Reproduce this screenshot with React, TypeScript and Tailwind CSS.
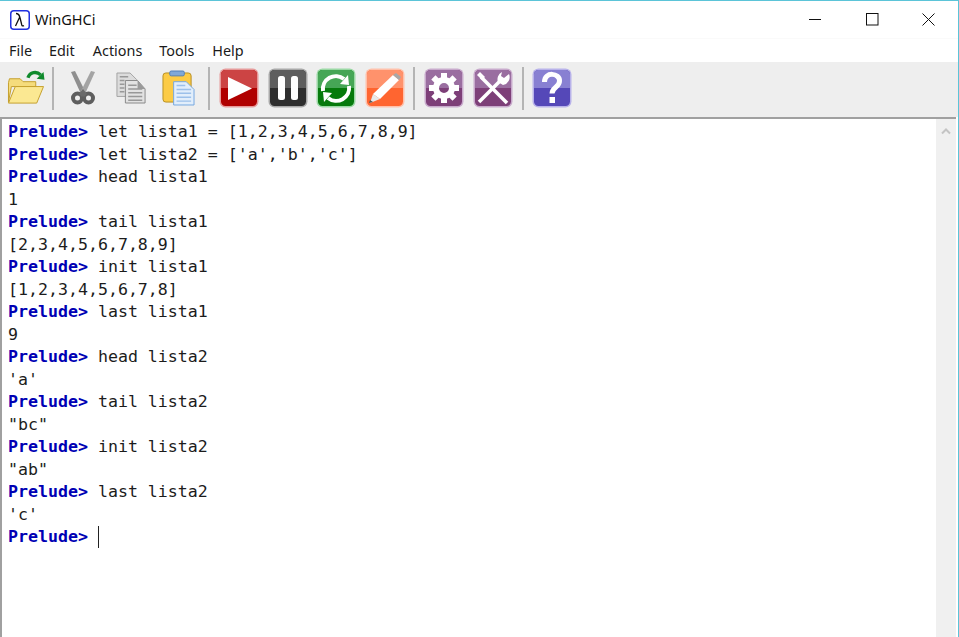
import type { ReactNode } from 'react';

// session transcript, true = prompt line
const lines: [boolean, string][] = [
  [true, 'let lista1 = [1,2,3,4,5,6,7,8,9]'],
  [true, "let lista2 = ['a','b','c']"],
  [true, 'head lista1'],
  [false, '1'],
  [true, 'tail lista1'],
  [false, '[2,3,4,5,6,7,8,9]'],
  [true, 'init lista1'],
  [false, '[1,2,3,4,5,6,7,8]'],
  [true, 'last lista1'],
  [false, '9'],
  [true, 'head lista2'],
  [false, "'a'"],
  [true, 'tail lista2'],
  [false, '"bc"'],
  [true, 'init lista2'],
  [false, '"ab"'],
  [true, 'last lista2'],
  [false, "'c'"],
];

function GlossButton({ border, top, bottom, children }: { border: string; top: string; bottom: string; children: ReactNode }) {
  return (
    <svg width="40" height="40" viewBox="0 0 40 40" className="shrink-0">
      <rect x="0.5" y="0.5" width="39" height="39" rx="6" fill={border} />
      <rect x="2" y="2" width="36" height="36" rx="4.5" fill={bottom} />
      <path d="M2 6.5A4.5 4.5 0 0 1 6.500 2h27a4.500 4.500 0 0 1 4.500 4.500V20H2z" fill={top} />
      {children}
    </svg>
  );
}

function Separator({ className }: { className: string }) {
  return <div className={`w-[2px] h-[43px] bg-[#b4b4b4] shrink-0 ${className}`} />;
}

function Toolbar() {
  return (
    <div className="flex items-center h-[55px] bg-[#eeeeee] pl-[7px] pb-[3px]">
      {/* open */}
      <svg width="38" height="37" viewBox="0 0 38 38" className="shrink-0">
        <path d="M1 13l1-4h11l3 3h13v5H4L1 33z" fill="#f5dc7c" stroke="#c49f2c" />
        <path d="M8 17h29l-7 17H1z" fill="#fbe892" stroke="#c49f2c" />
        <path d="M21 8c2-6 9-7 13-3" fill="none" stroke="#0f8a2c" strokeWidth="3.500" />
        <path d="M30 9l8 1-1-8z" fill="#0f8a2c" />
      </svg>
      <Separator className="ml-[7px]" />
      {/* cut */}
      <svg width="24" height="34" viewBox="0 0 24 34" className="shrink-0 ml-[17px]">
        <path d="M0 1l4-1 10 20-4 3z" fill="#8f8f8f" />
        <path d="M24 1l-4-1-10 20 4 3z" fill="#a4a4a4" />
        <circle cx="6.500" cy="27" r="4.500" fill="none" stroke="#5e5e5e" strokeWidth="4" />
        <circle cx="17.500" cy="27" r="4.500" fill="none" stroke="#5e5e5e" strokeWidth="4" />
        <path d="M8 23l4-5 4 5-3 3-1-1-1 1z" fill="#6a6a6a" />
      </svg>
      {/* copy */}
      <svg width="30" height="34" viewBox="0 0 32 34" className="shrink-0 ml-[21px]">
        <path d="M1 1h14l7 7v18H1z" fill="#dcdcdc" stroke="#a0a0a0" />
        <path d="M10 9h13l8 9v15H10z" fill="#e2e2e2" stroke="#858585" />
        <path d="M23 9v9h8z" fill="#9a9a9a" />
        <path d="M4 5h9M4 9h5M4 13h5M4 17h5M4 21h5M13 14h9M13 18h15M13 22h15M13 26h15M13 30h15" stroke="#989898" strokeWidth="1.500" />
      </svg>
      {/* paste */}
      <svg width="33" height="36" viewBox="0 0 34 37" className="shrink-0 ml-[16px]">
        <rect x="1" y="3" width="29" height="30" rx="3" fill="#fccb45" stroke="#b78e22" />
        <rect x="8" y="1" width="15" height="5" rx="1.500" fill="#7fa8d8" stroke="#4f7fb8" />
        <path d="M12 12h13l8 8v16H12z" fill="#e2eefb" stroke="#74a6e0" />
        <path d="M15 16h9M15 20h15M15 24h15M15 28h15M15 32h15" stroke="#9cc0ea" strokeWidth="1.500" />
      </svg>
      <Separator className="ml-[13px]" />
      <div className="ml-[9px] flex items-center gap-[8.7px]">
        <GlossButton border="#e69a9a" top="#cc4444" bottom="#b00000">
          <path d="M9 9l24 11.500L9 32z" fill="#fff" />
        </GlossButton>
        <GlossButton border="#a8a8a8" top="#5e5e5e" bottom="#2e2e2e">
          <rect x="10" y="8" width="7" height="24" rx="2.500" fill="#fff" />
          <rect x="23" y="8" width="7" height="24" rx="2.500" fill="#fff" />
        </GlossButton>
        <GlossButton border="#9ad8a4" top="#46a656" bottom="#067a0c">
          <path d="M7 23a13 13 0 0 1 21-12" fill="none" stroke="#fff" strokeWidth="4" />
          <path d="M24 16l9 1-1-10z" fill="#fff" />
          <path d="M33 18a13 13 0 0 1-21 12" fill="none" stroke="#fff" strokeWidth="4" />
          <path d="M16 25l-9-1 1 10z" fill="#fff" />
        </GlossButton>
        <GlossButton border="#ffc0aa" top="#ff926c" bottom="#ff6530">
          <path d="M28 7l6 5-19 19-7-5z" fill="#fff" />
          <path d="M28 7l3-2 5 4-2 3z" fill="#a8a8a8" />
          <path d="M8 26l7 5-10 4z" fill="#e8e8e8" />
          <path d="M5 32l3 2-4 1z" fill="#555" />
        </GlossButton>
      </div>
      <Separator className="ml-[8px]" />
      <div className="ml-[9px] flex items-center gap-[9px]">
        <GlossButton border="#c8aacc" top="#9a6ea0" bottom="#7d3f78">
          <circle cx="20" cy="20" r="8" fill="none" stroke="#fff" strokeWidth="6" />
          <path d="M17 5h6v6h-6zM17 29h6v6h-6zM5 17h6v6H5zM29 17h6v6h-6z" fill="#fff" />
          <path d="M17 5h6v6h-6zM17 29h6v6h-6zM5 17h6v6H5zM29 17h6v6h-6z" fill="#fff" transform="rotate(45 20 20)" />
        </GlossButton>
        <GlossButton border="#c8aacc" top="#9a6ea0" bottom="#7d3f78">
          <path d="M8 9l26 26" stroke="#fff" strokeWidth="3.500" />
          <path d="M29 11L6 34" stroke="#fff" strokeWidth="3.500" />
          <path d="M29 4a8 8 0 0 0-4 10l5 3a8 8 0 0 0 6-11l-5 4-3-2z" fill="#fff" />
          <path d="M4 7l3-3 5 5-3 3z" fill="#fff" />
        </GlossButton>
      </div>
      <Separator className="ml-[9px]" />
      <div className="ml-[8px]">
        <GlossButton border="#b8b2ea" top="#8880d2" bottom="#5548b8">
          <path d="M12.500 14c0-11 15.500-9 15-1 0 6.500-7.500 6-7.500 12.500" fill="none" stroke="#fff" strokeWidth="5" />
          <rect x="17.500" y="29" width="5.500" height="6" fill="#fff" />
        </GlossButton>
      </div>
    </div>
  );
}

export default function App() {
  return (
    <div className="w-[959px] h-[637px] overflow-hidden bg-white border-t border-r border-[#5bc4d8] flex flex-col font-['Noto_Sans',sans-serif] text-[#111111]">
      {/* title bar */}
      <div className="flex items-center h-[37px] shrink-0 pl-[10px]">
        <svg width="20" height="20" viewBox="0 0 20 20" className="shrink-0">
          <rect x="0.750" y="0.750" width="18.500" height="18.500" rx="3" fill="#fff" stroke="#2030e0" strokeWidth="1.500" />
          <path d="M6 3.500c3 0 3.500 2 4.200 5l1.600 6.500c.3 1 1 1.200 2.200.6M9.500 7.500L5.500 16" fill="none" stroke="#111" strokeWidth="1.300" />
        </svg>
        <span className="ml-[5px] text-[14.5px] leading-none">WinGHCi</span>
        <div className="ml-auto flex items-center">
          <svg width="14" height="14" viewBox="0 0 14 14" className="mr-[44px]"><path d="M1 6.500h12" stroke="#111" /></svg>
          <svg width="13" height="13" viewBox="0 0 13 13" className="mr-[43px]"><rect x="0.500" y="0.500" width="11.500" height="11.500" fill="none" stroke="#111" /></svg>
          <svg width="13" height="13" viewBox="0 0 13 13" className="mr-[23px]"><path d="M0.500 0.500l12 12M12.500 0.500l-12 12" stroke="#111" /></svg>
        </div>
      </div>
      {/* menu */}
      <div className="flex items-center h-[24px] shrink-0 pt-[2px] text-[14.4px] leading-none text-[#1a1a1a] border-t border-[#fafafa]">
        <span className="ml-[9px]">File</span>
        <span className="ml-[17px]">Edit</span>
        <span className="ml-[18px]">Actions</span>
        <span className="ml-[17px]">Tools</span>
        <span className="ml-[18px]">Help</span>
      </div>
      <Toolbar />
      {/* console */}
      <div className="flex-1 min-h-0 flex border-t-2 border-l-2 border-[#a0a0a0] mr-[2px]">
        <div className="flex-1 pl-[6px] pt-[2px] font-['DejaVu_Sans_Mono',monospace] text-[16.6px] leading-[22.5px] text-[#1c1c1c] whitespace-pre">
          {lines.map(([prompt, text], i) => (
            <div key={i} className="h-[22.5px]">
              {prompt && <span className="font-bold text-[#0000b4]">{'Prelude> '}</span>}
              {text}
            </div>
          ))}
          <div className="h-[22.5px] flex items-center">
            <span className="font-bold text-[#0000b4]">{'Prelude> '}</span>
            <span className="w-[1px] h-[22px] bg-[#222222]" />
          </div>
        </div>
        {/* scrollbar */}
        <div className="w-[20px] shrink-0 bg-[#f0f0f0] flex justify-center pt-[8px]">
          <svg width="10" height="8" viewBox="0 0 10 8" className="shrink-0"><path d="M1 6.500l4-4 4 4" fill="none" stroke="#c4c4c4" strokeWidth="2" /></svg>
        </div>
      </div>
    </div>
  );
}
